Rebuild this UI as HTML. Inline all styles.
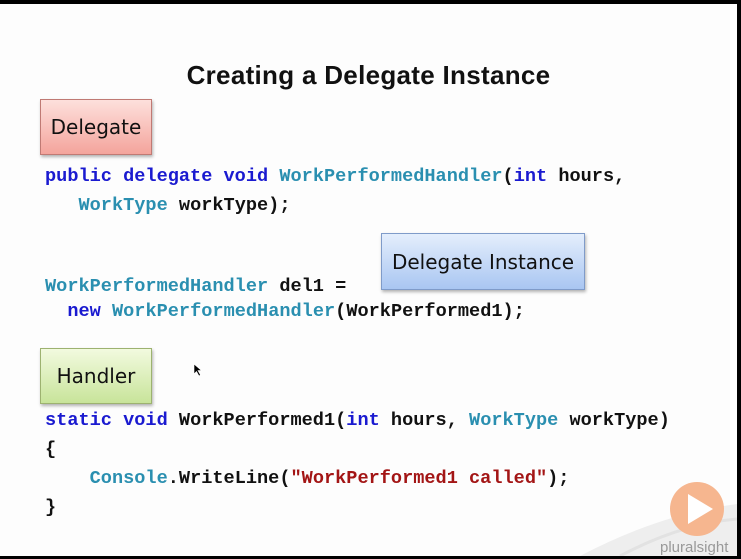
<!DOCTYPE html>
<html><head><style>
html,body{margin:0;padding:0}
body{width:741px;height:559px;background:#000;position:relative;overflow:hidden;font-family:"Liberation Sans",sans-serif}
.slide{position:absolute;left:0;top:4px;width:737px;height:552px;background:#fdfdfd}
.title{position:absolute;left:0;width:737px;top:56px;text-align:center;font-size:26px;font-weight:bold;color:#111;letter-spacing:0.3px}
.box{position:absolute;border:1px solid #999;box-shadow:1px 2px 3px rgba(0,0,0,.3);font-family:"Comic Sans MS","DejaVu Sans",sans-serif;font-size:20px;color:#111;display:flex;align-items:center;justify-content:center}
.code{position:absolute;font-family:"Liberation Mono",monospace;font-size:18.6px;font-weight:bold;color:#111;white-space:pre;line-height:29px}
.k{color:#1a1ad0}.t{color:#2a8fb0}.s{color:#a31515}
</style></head><body>
<div class="slide">
<div class="title">Creating a Delegate Instance</div>
<div class="box" style="left:40px;top:95px;width:110px;height:54px;background:linear-gradient(#fde0dc,#f4a49c);border-color:#c07a74">Delegate</div>
<div class="box" style="left:381px;top:229px;width:202px;height:55px;background:linear-gradient(#e4eefc,#a9c6f2);border-color:#7f9bc9">Delegate Instance</div>
<div class="box" style="left:40px;top:344px;width:110px;height:54px;background:linear-gradient(#f2fadf,#c8e49a);border-color:#9db270">Handler</div>
<div class="code" style="left:45px;top:158px"><span class="k">public delegate void</span> <span class="t">WorkPerformedHandler</span>(<span class="k">int</span> hours,
   <span class="t">WorkType</span> workType);</div>
<div class="code" style="left:45px;top:270px;line-height:25px"><span class="t">WorkPerformedHandler</span> del1 =
  <span class="k">new</span> <span class="t">WorkPerformedHandler</span>(WorkPerformed1);</div>
<div class="code" style="left:45px;top:402px"><span class="k">static void</span> WorkPerformed1(<span class="k">int</span> hours, <span class="t">WorkType</span> workType)
{
    <span class="t">Console</span>.WriteLine(<span class="s">"WorkPerformed1 called"</span>);
}</div>
<svg style="position:absolute;left:560px;top:440px" width="177" height="112">
<path d="M20 112 Q100 70 177 60 L177 112 Z" fill="#eeeeee"/>
<path d="M60 112 Q120 80 177 75" stroke="#e2e2e2" stroke-width="3" fill="none"/>
<circle cx="137" cy="65" r="27" fill="#f6b68f"/>
<path d="M128 50 L153 65 L128 80 Z" fill="#fff"/>
<text x="100" y="108" font-family="Liberation Sans,sans-serif" font-size="15" fill="#999">pluralsight</text>
</svg>
<svg style="position:absolute;left:193px;top:359px" width="10" height="14"><path d="M1 1 L1 11 L3.5 8.5 L6 13 L7.5 12 L5 7.5 L8.5 7.5 Z" fill="#000" stroke="#fff" stroke-width=".6"/></svg>
</div>
</body></html>
